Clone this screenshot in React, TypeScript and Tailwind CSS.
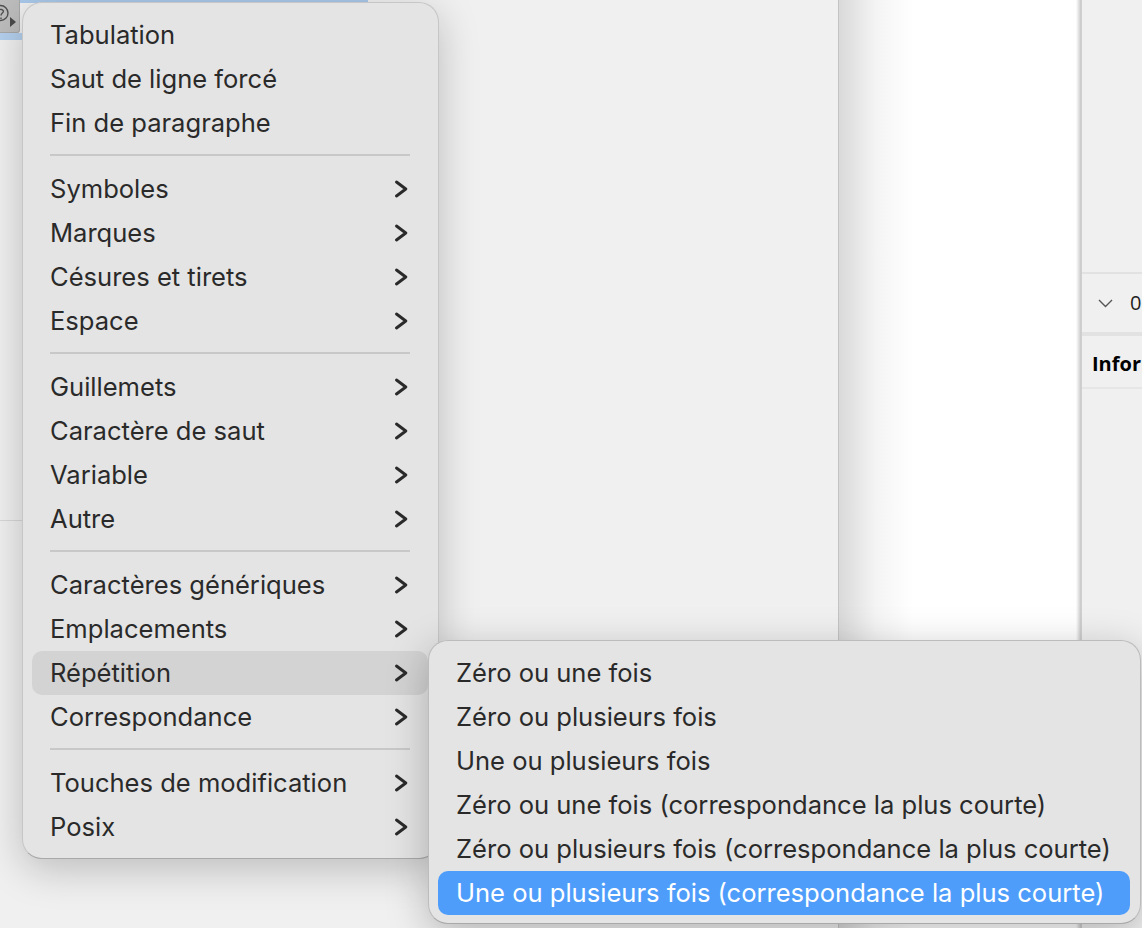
import React from "react";

const F = { fontFamily: '"Inter", "Liberation Sans", sans-serif' };

function Chevron() {
  return (
    <svg width="16" height="18" viewBox="0 0 16 18" fill="none" className="shrink-0">
      <path d="M2.5 2 L11.8 9 L2.5 16" stroke="#2a2a2a" strokeWidth="2.9" strokeLinecap="round" strokeLinejoin="round" />
    </svg>
  );
}

function Item({ label, sub, active }: { label: string; sub?: boolean; active?: boolean }) {
  return (
    <div className={`flex h-[44px] items-center justify-between px-[18px] rounded-[10px] text-[25.55px] text-[#2a2a2a] ${active ? "bg-[#d3d3d3]" : ""}`}>
      <span>{label}</span>
      {sub ? <Chevron /> : null}
    </div>
  );
}

function Sep() {
  return (
    <div className="flex h-[22px] items-center px-[18px] pb-[2px]">
      <div className="h-[2px] w-full bg-[#c8c8c8]" />
    </div>
  );
}

const groups: { label: string; sub?: boolean; active?: boolean }[][] = [
  [{ label: "Tabulation" }, { label: "Saut de ligne forcé" }, { label: "Fin de paragraphe" }],
  [
    { label: "Symboles", sub: true },
    { label: "Marques", sub: true },
    { label: "Césures et tirets", sub: true },
    { label: "Espace", sub: true },
  ],
  [
    { label: "Guillemets", sub: true },
    { label: "Caractère de saut", sub: true },
    { label: "Variable", sub: true },
    { label: "Autre", sub: true },
  ],
  [
    { label: "Caractères génériques", sub: true },
    { label: "Emplacements", sub: true },
    { label: "Répétition", sub: true, active: true },
    { label: "Correspondance", sub: true },
  ],
  [{ label: "Touches de modification", sub: true }, { label: "Posix", sub: true }],
];

const subItems = [
  "Zéro ou une fois",
  "Zéro ou plusieurs fois",
  "Une ou plusieurs fois",
  "Zéro ou une fois (correspondance la plus courte)",
  "Zéro ou plusieurs fois (correspondance la plus courte)",
];

export default function App() {
  return (
    <div className="relative flex h-[928px] w-[1142px] overflow-hidden bg-white" style={F}>
      {/* Left document column */}
      <div className="flex h-full w-[839px] shrink-0 flex-col border-r border-[#c4c4c4] bg-[#f0f0f0]">
        <div className="flex h-[40px] shrink-0 flex-col">
          <div className="flex h-[33px]">
            <div className="relative h-[33px] w-[20px] shrink-0 rounded-br-[3px] border-b border-r border-[#a8a8a8] bg-[#bdbdbd]">
              <svg width="19" height="32" viewBox="0 0 19 32" fill="none" className="absolute left-0 top-0">
                <circle cx="0.5" cy="13" r="7.5" stroke="#505050" strokeWidth="1.4" />
                <path d="M-1 10 A3 3 0 0 1 3.5 11 C3.5 13 1 13 1 15.5 M1 17.5 L1 19" stroke="#505050" strokeWidth="1.4" />
                <path d="M10 17 L16 22 L10 27 Z" fill="#4a4a4a" />
              </svg>
            </div>
            <div className="h-[3px] w-[348px] bg-[#a9c8ea]" />
          </div>
          <div className="h-[7px] w-[24px] bg-[#b4d0ee]" />
        </div>
        <div className="h-[480px] shrink-0" />
        <div className="h-[1px] w-[24px] bg-[#d8d8d8]" />
      </div>

      {/* White page area */}
      <div className="flex h-full w-[242px] shrink-0">
        <div className="h-full w-[74px] bg-gradient-to-r from-[#d9d9d9] via-[#f4f4f4] to-white" />
        <div className="h-full flex-1 bg-white" />
        <div className="h-full w-[5px] bg-gradient-to-r from-white to-[#c8c8c8]" />
      </div>

      {/* Right side panel */}
      <div className="flex h-full flex-1 flex-col border-l border-[#cfcfcf] bg-[#f0f0f0]" style={{ fontFamily: '"Open Sans", sans-serif' }}>
        <div className="h-[274px] shrink-0 border-b-2 border-[#e2e2e2]" />
        <div className="flex h-[58px] shrink-0 items-center gap-[17px] whitespace-nowrap pl-[16px] text-[20px] text-[#222]">
          <svg width="15" height="9" viewBox="0 0 15 9" fill="none" className="shrink-0">
            <path d="M1 1 L7.5 7.5 L14 1" stroke="#555" strokeWidth="1.4" />
          </svg>
          <span>0</span>
        </div>
        <div className="h-[4px] shrink-0 bg-[#e2e2e2]" />
        <div className="flex h-[53px] shrink-0 items-center overflow-hidden whitespace-nowrap border-b-2 border-[#e6e6e6] pl-[10px] pt-[5px] text-[20px] font-bold text-black">
          Information
        </div>
      </div>

      {/* Main menu */}
      <div className="absolute left-[22px] top-[2px] w-[417px] whitespace-nowrap rounded-[20px] border border-[#c6c6c6] border-b-[#a9a9a9] bg-[#e4e4e4] pl-[9px] pr-[10px] pb-[9px] pt-[10px] shadow-[0_10px_40px_rgba(0,0,0,0.22)]">
        {groups.map((g, i) => (
          <div key={i}>
            {i > 0 ? <Sep /> : null}
            {g.map((it) => (
              <Item key={it.label} {...it} />
            ))}
          </div>
        ))}
      </div>

      {/* Submenu */}
      <div className="absolute left-[428px] top-[640px] w-[713px] whitespace-nowrap rounded-[20px] border border-[#bcbcbc] border-b-[#a9a9a9] bg-[#e4e4e4] pl-[9px] pr-[10px] pb-[8px] pt-[10px] shadow-[0_10px_40px_rgba(0,0,0,0.25)]">
        {subItems.map((s) => (
          <Item key={s} label={s} />
        ))}
        <div className="flex h-[44px] items-center rounded-[10px] bg-[#4e9dfb] pl-[18px] text-[25.55px] text-white">
          Une ou plusieurs fois (correspondance la plus courte)
        </div>
      </div>
    </div>
  );
}
